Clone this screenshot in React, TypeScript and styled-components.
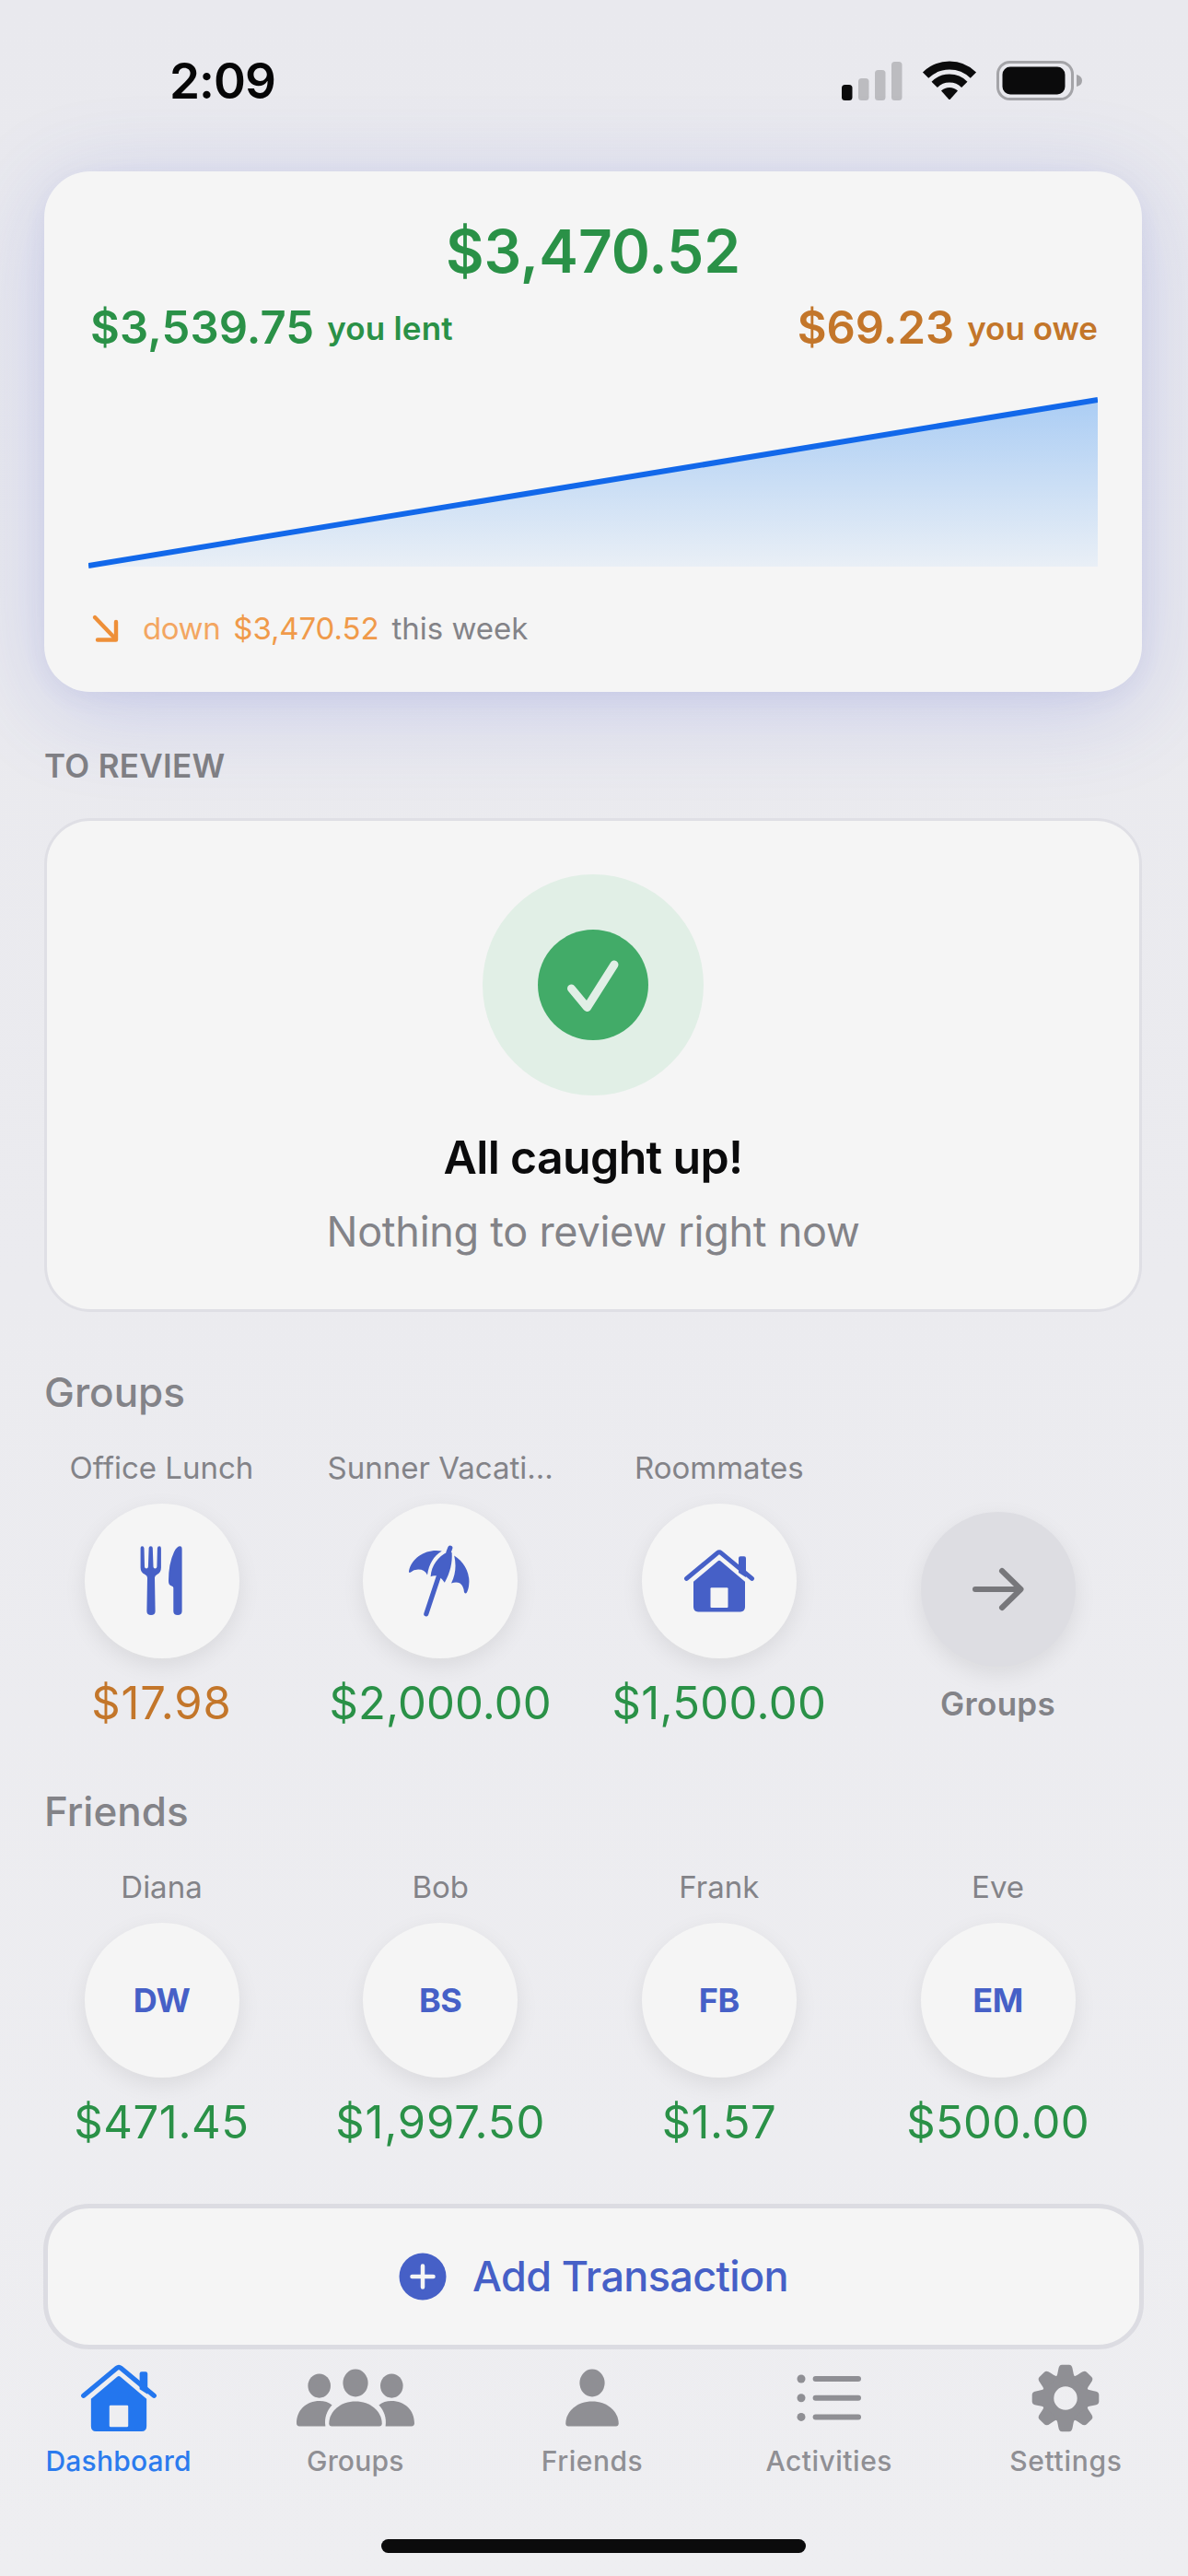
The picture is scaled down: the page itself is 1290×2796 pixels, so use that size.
import React from "react";
import styled, { createGlobalStyle } from "styled-components";

const GREEN = "#2a9147";
const ORANGE = "#c3762a";
const INDIGO = "#4660c7";
const GRAY = "#838388";
const TAB_GRAY = "#8f8f94";
const SURFACE = "#f5f5f5";

const GlobalStyle = createGlobalStyle`
  *, *::before, *::after { box-sizing: border-box; }
  body {
    margin: 0;
    font-family: Inter, "Liberation Sans", sans-serif;
    -webkit-font-smoothing: antialiased;
  }
`;

const Screen = styled.div`
  width: 1290px;
  height: 2796px;
  display: flex;
  flex-direction: column;
  overflow: hidden;
  background: linear-gradient(180deg, #e9e9ee 0%, #ebebef 50%, #eeeef1 100%);
`;

const StatusBar = styled.header`
  height: 186px;
  padding: 0 114px 11px 184px;
  display: flex;
  align-items: center;
  justify-content: space-between;
`;

const StatusIcons = styled.div`
  display: flex;
  align-items: center;
  gap: 21px;
`;

const Text = styled.span<{
  $size: number;
  $line: number;
  $weight?: number;
  $color?: string;
  $spacing?: number;
}>`
  font-size: ${(p) => p.$size}px;
  line-height: ${(p) => p.$line}px;
  font-weight: ${(p) => p.$weight ?? 400};
  color: ${(p) => p.$color ?? GRAY};
  letter-spacing: ${(p) => p.$spacing ?? 0}px;
  white-space: nowrap;
`;

const Content = styled.main`
  display: flex;
  flex-direction: column;
  padding: 0 50px 0 48px;
`;

const BalanceCard = styled.section`
  height: 565px;
  padding: 47px 48px 0;
  display: flex;
  flex-direction: column;
  align-items: stretch;
  border-radius: 50px;
  background: ${SURFACE};
  box-shadow: 0 18px 100px rgba(70, 90, 215, 0.21), 0 6px 26px rgba(60, 60, 160, 0.06);
`;

const Total = styled.div`
  display: flex;
  justify-content: center;
`;

const Split = styled.div`
  margin-top: 13px;
  padding-left: 2px;
  display: flex;
  justify-content: space-between;
`;

const Figure = styled.div`
  display: flex;
  align-items: center;
  gap: 14px;
`;

const Chart = styled.svg`
  display: block;
  width: 1096px;
  height: 196px;
  margin-top: 40px;
`;

const Trend = styled.div`
  margin-top: 40px;
  padding-left: 2px;
  display: flex;
  align-items: center;
  gap: 14px;
`;

const TrendIcon = styled.svg`
  width: 32px;
  height: 32px;
  margin-right: 11px;
`;

const ReviewTitle = styled.div`
  display: flex;
  margin: 58px 0 35px;
`;

const ReviewCard = styled.section`
  height: 536px;
  padding-top: 58px;
  display: flex;
  flex-direction: column;
  align-items: center;
  border: 3px solid #dfdfe5;
  border-radius: 50px;
  background: ${SURFACE};
`;

const ReviewBadge = styled.svg`
  width: 240px;
  height: 240px;
  margin-bottom: 37px;
`;

const ReviewNote = styled.div`
  display: flex;
  margin-top: 24px;
`;

const Section = styled.section`
  margin-top: 60px;
  height: 395px;
  display: flex;
  flex-direction: column;
`;

const Row = styled.div`
  margin-top: 33px;
  width: 1164px;
  display: grid;
  grid-template-columns: repeat(4, 256px);
  column-gap: 46.7px;
`;

const Item = styled.div<{ $top?: number }>`
  padding: ${(p) => p.$top ?? 0}px 1px 0 0;
  display: flex;
  flex-direction: column;
  align-items: center;
`;

const Disc = styled.div<{ $muted?: boolean }>`
  width: 168px;
  height: 168px;
  margin: ${(p) => (p.$muted ? "0 0 18px" : "17px 0 19px")};
  display: flex;
  align-items: center;
  justify-content: center;
  border-radius: 50%;
  background: ${(p) => (p.$muted ? "#dddde2" : SURFACE)};
  box-shadow: 0 8px 24px rgba(0, 0, 0, 0.08);
`;

const AddButton = styled.button`
  width: 1195px;
  height: 158px;
  margin: 58px -1px 0;
  display: flex;
  align-items: center;
  justify-content: center;
  gap: 28px;
  border: 5px solid #dcdce2;
  border-radius: 50px;
  background: ${SURFACE};
  font-family: inherit;
`;

const TabBar = styled.nav`
  height: 206px;
  padding: 14px 4px 0 0;
  display: grid;
  grid-template-columns: repeat(5, 1fr);
`;

const Tab = styled.div`
  display: flex;
  flex-direction: column;
  align-items: center;
`;

const TabIcon = styled.svg`
  width: 140px;
  height: 78px;
  margin-bottom: 11px;
`;

const HomeIndicator = styled.div`
  width: 461px;
  height: 15px;
  flex: none;
  align-self: center;
  margin-right: 1px;
  border-radius: 8px;
  background: #0b0b0c;
`;

const HouseShape = ({ fill, door }: { fill: string; door: string }) => (
  <>
    <path d="M21 -9V-24.7Q21 -26.7 23 -26.7H27Q29 -26.7 29 -24.7V-4Z" fill={fill} />
    <path
      d="M-35.5 -2.6L-2 -30.4Q0 -32 2 -30.4L35.5 -2.6"
      fill="none"
      stroke={fill}
      strokeWidth="5"
      strokeLinecap="round"
      strokeLinejoin="round"
    />
    <path
      d="M-28 .8L-1.6 -21.6Q0 -23 1.6 -21.6L28 .8V28.3Q28 33.4 23 33.4H-23Q-28 33.4 -28 28.3Z"
      fill={fill}
    />
    <rect x="-9.5" y="7.3" width="19" height="21.6" rx="1" fill={door} />
  </>
);

const DiscSvg = styled.svg`
  width: 100px;
  height: 100px;
`;

const ForkKnife = () => (
  <DiscSvg viewBox="-50 -50 100 100" fill={INDIGO}>
    <path d="M-21.7 -37.7Q-19.6 -37.7 -19.5 -35.5L-19 -15.5Q-18.9 -13.6 -17 -13.6Q-15.2 -13.6 -15.1 -15.5L-14.4 -35.7Q-14.3 -37.7 -12.3 -37.7Q-10.3 -37.7 -10.2 -35.7L-9.5 -15.5Q-9.4 -13.6 -7.6 -13.6Q-5.7 -13.6 -5.6 -15.5L-5.1 -35.5Q-5 -37.7 -2.9 -37.7Q-1.2 -37.7 -1.1 -35.5V-14.5Q-1.1 -9 -5.5 -7Q-8 -5.8 -8 -3.5L-7.4 33Q-7.5 37 -12 37Q-16.5 37 -16.6 33L-16 -3.5Q-16 -5.8 -18.5 -7Q-23.4 -9 -23.4 -14.5V-35.5Q-23.4 -37.7 -21.7 -37.7Z" />
    <path d="M19 -37.7Q21.6 -38 21.6 -34.5V33Q21.4 37 17 37Q12.4 37 12.3 33V7.5Q12.3 6.2 10.5 5.6Q6.9 4.5 7 0Q7 -19 13 -31.5Q16 -37.4 19 -37.7Z" />
  </DiscSvg>
);

const Umbrella = () => (
  <DiscSvg viewBox="-50 -50 100 100" fill={INDIGO}>
    <path d="M-2 -4L-15.2 35.800" stroke={INDIGO} strokeWidth="5.2" strokeLinecap="round" />
    <path d="M10.8 -35.800L9 -31" stroke={INDIGO} strokeWidth="5.2" strokeLinecap="round" />
    <path d="M-34 -10.8C-30.5 -26.5 -14 -35.5 1.8 -32.4C-7.5 -26.5 -12 -18.5 -14 -6.6Q-17 -12.6 -24 -12.4Q-29 -12.2 -32 -9.4Q-34.4 -8.4 -34 -10.8Z" />
    <path d="M8.2 -31.5C-2.5 -26.5 -9.4 -17 -10.4 -4.8Q-5 -6.8 -1 -4.3Q3 -2 4.8 1.8C10.8 -9 13.5 -20 12.6 -31Z" />
    <path d="M15.2 -27.6C28 -20 35.2 -3.4 29.4 11.6Q28 15 26 12.2Q25.5 5.6 21.5 2.6Q17.5 .2 12 2.6C17 -8 17.5 -17.5 15.2 -27.6Z" />
  </DiscSvg>
);

const House = () => (
  <DiscSvg viewBox="-50 -50 100 100">
    <HouseShape fill={INDIGO} door={SURFACE} />
  </DiscSvg>
);

const ArrowRight = () => (
  <DiscSvg
    viewBox="-50 -50 100 100"
    fill="none"
    stroke="#77777b"
    strokeWidth="6"
    strokeLinecap="round"
    strokeLinejoin="round"
  >
    <path d="M-25 0H24M4 -20L24.5 0L4 20" />
  </DiscSvg>
);

const Person = () => (
  <>
    <ellipse cx="0" cy="-16.500" rx="13.6" ry="15" />
    <path d="M-28.7 27.5C-28.7 14 -16 3.4 0 3.4S28.7 14 28.7 27.5Q28.7 30.4 25.8 30.4H-25.8Q-28.7 30.4 -28.7 27.5Z" />
  </>
);

const SideBody = "M-60.8 30.4Q-64 30.4 -64 27.3C-64 13 -53.5 3 -39 3Q-31 3 -25.4 7.4C-31 13.5 -34 21 -32.6 30.4Z";

const tabs = [
  {
    label: "Dashboard",
    spacing: 0.2,
    icon: (
      <g transform="scale(1.077)">
        <HouseShape fill="#2376ee" door="#eeeef1" />
      </g>
    ),
  },
  {
    label: "Groups",
    spacing: 0.2,
    icon: (
      <>
        <ellipse cx="-39.3" cy="-13.4" rx="12.3" ry="13.1" />
        <ellipse cx="39.3" cy="-13.4" rx="12.3" ry="13.1" />
        <path d={SideBody} />
        <path d={SideBody} transform="scale(-1 1)" />
        <Person />
      </>
    ),
  },
  { label: "Friends", spacing: 0.5, icon: <Person /> },
  {
    label: "Activities",
    spacing: 0.5,
    icon: (
      <>
        {[-21, -0.3, 20.4].map((y) => (
          <g key={y}>
            <circle cx="-30" cy={y} r="4.5" />
            <rect x="-17.4" y={y - 3} width="52.4" height="6" rx="3" />
          </g>
        ))}
      </>
    ),
  },
  {
    label: "Settings",
    spacing: 0.7,
    icon: (
      <>
        <circle r="19.2" fill="none" stroke={TAB_GRAY} strokeWidth="13" />
        {[0, 45, 90, 135, 180, 225, 270, 315].map((a) => (
          <path
            key={a}
            transform={`rotate(${a})`}
            d="M-10.5 -22Q-8.6 -25 -7.8 -31Q-7.2 -36.3 -3.8 -36.3H3.8Q7.2 -36.3 7.8 -31Q8.6 -25 10.5 -22Z"
          />
        ))}
      </>
    ),
  },
];

const groups = [
  { name: "Office Lunch", amount: "$17.98", spacing: 0.8, color: ORANGE, icon: <ForkKnife /> },
  { name: "Sunner Vacati...", amount: "$2,000.00", spacing: 0.1, color: GREEN, icon: <Umbrella /> },
  { name: "Roommates", amount: "$1,500.00", spacing: 0.3, color: GREEN, icon: <House /> },
];

const friends = [
  { name: "Diana", initials: "DW", amount: "$471.45", spacing: 0.6 },
  { name: "Bob", initials: "BS", amount: "$1,997.50", spacing: 0.8 },
  { name: "Frank", initials: "FB", amount: "$1.57", spacing: 0.4 },
  { name: "Eve", initials: "EM", amount: "$500.00", spacing: 0.3 },
];

export default function App() {
  return (
    <Screen>
      <GlobalStyle />
      <StatusBar>
        <Text $size={53} $line={60} $weight={600} $color="#060607" $spacing={-1}>
          2:09
        </Text>
        <StatusIcons>
          <svg width="66" height="42" viewBox="0 0 66 42">
            <rect x="0" y="25" width="11.5" height="17" rx="3.5" fill="#0b0b0c" />
            <rect x="18" y="18" width="11.5" height="24" rx="3.5" fill="#bcbcc0" />
            <rect x="36" y="9" width="11.5" height="33" rx="3.5" fill="#bcbcc0" />
            <rect x="54" y="0" width="11.5" height="42" rx="3.5" fill="#bcbcc0" />
          </svg>
          <svg width="60" height="43" viewBox="-30 -42 60 43">
            <path d="M-25.9 -26.4A37 37 0 0 1 25.9 -26.4" fill="none" stroke="#0b0b0c" strokeWidth="9" />
            <path d="M-16.3 -16.2A23 23 0 0 1 16.3 -16.2" fill="none" stroke="#0b0b0c" strokeWidth="9" />
            <path d="M-9 -9.4A13 13 0 0 1 9 -9.4L1 -.6Q0 .4 -1 -.6Z" fill="#0b0b0c" />
          </svg>
          <svg width="94" height="43" viewBox="0 0 94 43">
            <rect x="1.5" y="1.5" width="81" height="40" rx="13" fill="none" stroke="#a4a4a8" strokeWidth="3" />
            <rect x="6.5" y="6.5" width="68" height="30" rx="8.5" fill="#0b0b0c" />
            <path d="M87 15Q93 16.500 93 21.500T87 28Z" fill="#a4a4a8" />
          </svg>
        </StatusIcons>
      </StatusBar>

      <Content>
        <BalanceCard>
          <Total>
            <Text $size={64} $line={80} $weight={600} $color={GREEN}>
              $3,470.52
            </Text>
          </Total>
          <Split>
            <Figure>
              <Text $size={49} $line={60} $weight={600} $color={GREEN} $spacing={0.1}>
                $3,539.75
              </Text>
              <Text $size={35} $line={60} $weight={600} $color={GREEN} $spacing={0.2}>
                you lent
              </Text>
            </Figure>
            <Figure>
              <Text $size={49} $line={60} $weight={600} $color={ORANGE}>
                $69.23
              </Text>
              <Text $size={35} $line={60} $weight={600} $color={ORANGE}>
                you owe
              </Text>
            </Figure>
          </Split>
          <Chart viewBox="0 0 1096 196">
            <defs>
              <linearGradient id="area" x1="0" y1="0" x2="0" y2="1">
                <stop offset="0" stopColor="#abcdf4" />
                <stop offset="1" stopColor="#e9eff6" />
              </linearGradient>
            </defs>
            <path d="M0 189L1096 8V189Z" fill="url(#area)" />
            <path d="M0 188L1096 8" stroke="#1268ea" strokeWidth="6" />
          </Chart>
          <Trend>
            <TrendIcon viewBox="0 0 32 32" fill="none" stroke="#ee8f38" strokeWidth="4.4">
              <path d="M5 4L27 27" strokeLinecap="round" />
              <path d="M8 28.500H28V9" strokeLinecap="round" strokeLinejoin="round" />
            </TrendIcon>
            <Text $size={33} $line={40} $color="#f3a661" $spacing={-0.4}>
              down
            </Text>
            <Text $size={33} $line={40} $color="#f09a4a" $spacing={-0.1}>
              $3,470.52
            </Text>
            <Text $size={33} $line={40}>this week</Text>
          </Trend>
        </BalanceCard>

        <ReviewTitle>
          <Text $size={35} $line={44} $weight={600} $color="#7f7f84" $spacing={0.3}>
            TO REVIEW
          </Text>
        </ReviewTitle>

        <ReviewCard>
          <ReviewBadge viewBox="0 0 240 240">
            <circle cx="120" cy="120" r="120" fill="#e1efe6" />
            <circle cx="120" cy="120" r="60" fill="#42ab68" />
            <path
              d="M96.500 124L113.500 144.500L143 98"
              fill="none"
              stroke="#e1efe6"
              strokeWidth="9"
              strokeLinecap="round"
              strokeLinejoin="round"
            />
          </ReviewBadge>
          <Text $size={50} $line={60} $weight={600} $color="#0b0b0c" $spacing={-0.65}>
            All caught up!
          </Text>
          <ReviewNote>
            <Text $size={45} $line={54} $spacing={-0.27}>
              Nothing to review right now
            </Text>
          </ReviewNote>
        </ReviewCard>

        <Section>
          <Text $size={44} $line={54} $weight={500}>
            Groups
          </Text>
          <Row>
            {groups.map((g) => (
              <Item key={g.name}>
                <Text $size={33} $line={44}>{g.name}</Text>
                <Disc>{g.icon}</Disc>
                <Text $size={49} $line={60} $color={g.color} $spacing={g.spacing}>
                  {g.amount}
                </Text>
              </Item>
            ))}
            <Item $top={70}>
              <Disc $muted>
                <ArrowRight />
              </Disc>
              <Text $size={35} $line={44} $weight={600} $spacing={0.3}>
                Groups
              </Text>
            </Item>
          </Row>
        </Section>

        <Section>
          <Text $size={44} $line={54} $weight={500}>
            Friends
          </Text>
          <Row>
            {friends.map((f) => (
              <Item key={f.name}>
                <Text $size={33} $line={44}>{f.name}</Text>
                <Disc>
                  <Text $size={36} $line={44} $weight={700} $color={INDIGO} $spacing={-0.4}>
                    {f.initials}
                  </Text>
                </Disc>
                <Text $size={49} $line={60} $color={GREEN} $spacing={f.spacing}>
                  {f.amount}
                </Text>
              </Item>
            ))}
          </Row>
        </Section>

        <AddButton>
          <svg width="52" height="52" viewBox="-26 -26 52 52">
            <circle r="25.500" fill={INDIGO} />
            <path d="M-11.500 0H11.500M0 -11.500V11.500" stroke={SURFACE} strokeWidth="4.500" strokeLinecap="round" />
          </svg>
          <Text $size={45} $line={54} $weight={500} $color={INDIGO} $spacing={-0.65}>
            Add Transaction
          </Text>
        </AddButton>
      </Content>

      <TabBar>
        {tabs.map((t, i) => (
          <Tab key={t.label}>
            <TabIcon viewBox="-70 -39 140 78" fill={TAB_GRAY}>
              {t.icon}
            </TabIcon>
            <Text $size={30} $line={36} $weight={500} $color={i === 0 ? "#2b7bee" : TAB_GRAY} $spacing={t.spacing}>
              {t.label}
            </Text>
          </Tab>
        ))}
      </TabBar>
      <HomeIndicator />
    </Screen>
  );
}
